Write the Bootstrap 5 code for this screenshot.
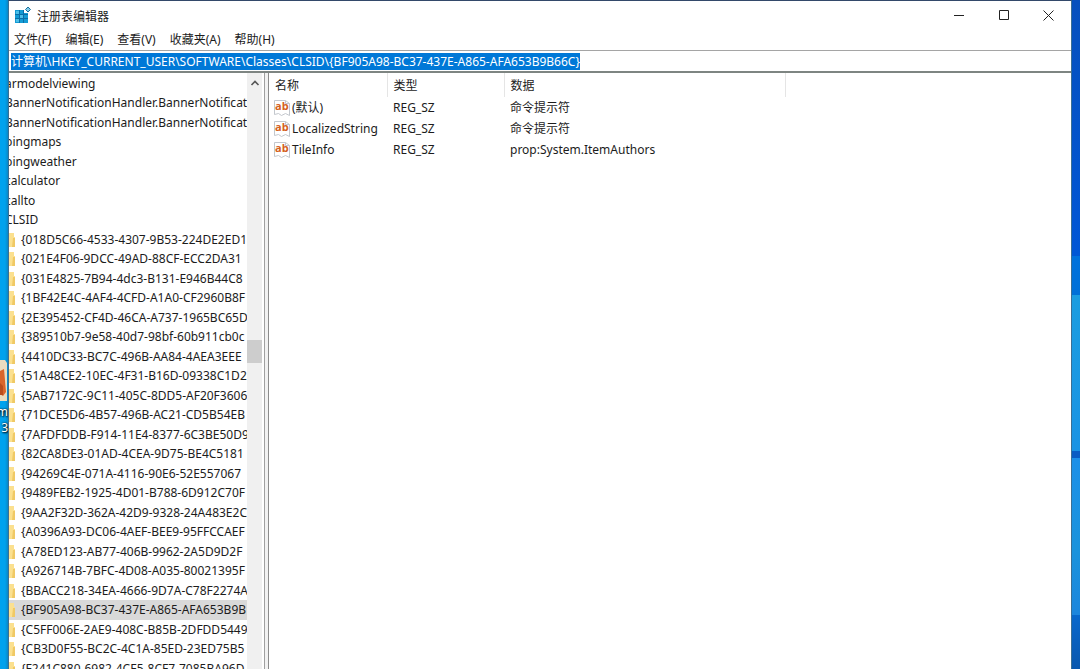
<!DOCTYPE html>
<html lang="zh-CN">
<head>
<meta charset="utf-8">
<meta name="viewport" content="width=device-width, initial-scale=1">
<title>注册表编辑器</title>
<link href="https://cdn.jsdelivr.net/npm/bootstrap@5.3.0/dist/css/bootstrap.min.css" rel="stylesheet">
<style>
  body { font-family: "Noto Sans", "Noto Sans CJK SC", sans-serif; font-size: 12px; line-height: 20px; color: #1c1c1c; background: #00a0e9; }
  .desk-left { width: 8px; background: linear-gradient(90deg, #00a2ee 5px, #0a86c4); padding-top: 360px; }
  .desk-right { width: 8px; background: linear-gradient(#0650bd 0, #0057d6 256px, #0072dc 256px, #0070d8 295px, #1b9de0 295px, #1a93e4 451px, #0a5cc4 451px, #0a5cc4 458px, #1c90e8 458px, #1b93dc 550px, #1c86dd 615px, #0868cc 615px, #0857ae 669px); }
  .desk-label { color: #fff; text-shadow: 0 0 2px #000, 1px 1px 2px #000; line-height: 16px; }
  .regedit { border: 1px solid #3b6f94; border-top-color: #33496a; border-bottom: 0; min-width: 0; }
  .title-bar { height: 28px; }
  .win-btn { width: 45px; height: 28px; }
  .menu-bar { height: 21px; padding: 1px 0 0 5px; gap: 14px; }
  .menu-bar a { color: #1c1c1c; }
  .address-bar { height: 23px; border-top: 1px solid #a5a5a5; border-bottom: 2px solid #7e8582; padding: 2px; }
  .address-bar input { font-size: 12px; line-height: 17px; height: 17px; outline: 0; color: #1c1c1c; }
  .address-bar input::selection { background: #0078d7; color: #fff; }
  .tree-pane { width: 256px; border-right: 1px solid #a0a0a0; }
  .tree { padding-top: 1px; }
  .tree li { height: 19px; line-height: 20px; white-space: nowrap; }
  .tree li:nth-child(even) { height: 20px; }
  .tree .outer { margin-left: -4px; }
  .tree .chosen { background: #d9d9d9; }
  .scroll-track { width: 15px; margin-right: 2px; background: #f0f0f0; }
  .scroll-thumb { height: 23px; background: #cdcdcd; margin-top: 249px; }
  .splitter { width: 4px; background: #f2f2f2; border-right: 1px solid #8c8c8c; }
  .values { table-layout: fixed; width: 516px; }
  .values th { font-weight: 400; height: 24px; padding: 1px 6px 0; border-right: 1px solid #e5e5e5; }
  .values td { height: 21px; padding: 0 6px; line-height: 20px; white-space: nowrap; }
  .values td:first-child { padding-left: 5px; }
  .value-name { gap: 2px; }
</style>
</head>
<body class="d-flex vh-100 overflow-hidden">
  <div class="desk-left flex-shrink-0 overflow-hidden">
    <svg class="d-block" width="8" height="44" viewBox="0 0 8 44">
      <path d="M0 0h5l2 3v38H0z" fill="#e9dcc0"/><path d="M0 11l4-2 2 23-3 4-3-2z" fill="#d9652b"/><path d="M0 23l3 3v9H0z" fill="#b94d1d"/>
    </svg>
    <div class="desk-label d-flex flex-column align-items-end"><span>m</span><span>3</span></div>
  </div>

  <main class="regedit bg-white flex-fill d-flex flex-column">
    <header class="title-bar d-flex align-items-center">
      <svg class="ms-1" width="20" height="18" viewBox="0 0 20 18">
        <path d="M2 4h13v13H2z" fill="#149bd4"/>
        <path d="M2 8.500h13M2 12.500h13M6.500 4v13M10.500 4v13" stroke="#0a6fa8"/>
        <path d="M3 5h3v3H3zM7 9h3v3H7zM3 13h3v3H3z" fill="#4cbfe8"/>
        <path d="M11 0h7v7h-7z" fill="#fff"/>
        <path d="M12.500 3.500l2.500-2.500 2.500 2.500L15 6z" fill="#7fcbea" stroke="#19709c"/>
      </svg>
      <span class="flex-fill pt-1 ms-1">注册表编辑器</span>
      <button class="win-btn btn p-0 border-0 rounded-0 d-flex align-items-center justify-content-center" aria-label="最小化"><svg width="10" height="10"><path d="M0 5.500h10" stroke="#222"/></svg></button>
      <button class="win-btn btn p-0 border-0 rounded-0 d-flex align-items-center justify-content-center" aria-label="最大化"><svg width="10" height="10"><path d="M.5.5h9v9h-9z" fill="none" stroke="#222"/></svg></button>
      <button class="win-btn btn p-0 border-0 rounded-0 d-flex align-items-center justify-content-center" aria-label="关闭"><svg width="11" height="11"><path d="M.5.5l10 10m0-10l-10 10" stroke="#222"/></svg></button>
    </header>

    <nav class="menu-bar d-flex align-items-center">
      <a class="text-decoration-none" href="#">文件(F)</a>
      <a class="text-decoration-none" href="#">编辑(E)</a>
      <a class="text-decoration-none" href="#">查看(V)</a>
      <a class="text-decoration-none" href="#">收藏夹(A)</a>
      <a class="text-decoration-none" href="#">帮助(H)</a>
    </nav>

    <div class="address-bar">
      <input id="path" class="d-block w-100 border-0 p-0" type="text" aria-label="地址" spellcheck="false" value="计算机\HKEY_CURRENT_USER\SOFTWARE\Classes\CLSID\{BF905A98-BC37-437E-A865-AFA653B9B66C}">
    </div>

    <div class="d-flex flex-fill overflow-hidden">
      <div class="tree-pane d-flex flex-shrink-0">
        <div class="flex-fill overflow-hidden">
          <ul class="tree list-unstyled mb-0" id="tree">
            <li><div class="outer">armodelviewing</div></li>
            <li><div class="outer">BannerNotificationHandler.BannerNotificat</div></li>
            <li><div class="outer">BannerNotificationHandler.BannerNotificat</div></li>
            <li><div class="outer">bingmaps</div></li>
            <li><div class="outer">bingweather</div></li>
            <li><div class="outer">calculator</div></li>
            <li><div class="outer">callto</div></li>
            <li><div class="outer">CLSID</div></li>
          </ul>
        </div>
        <div class="scroll-track flex-shrink-0">
          <svg class="d-block" width="15" height="18" viewBox="0 0 15 18"><path d="M4.500 12L8 8.500l3.500 3.500" fill="none" stroke="#555" stroke-width="1.600"/></svg>
          <div class="scroll-thumb"></div>
        </div>
      </div>
      <div class="splitter flex-shrink-0"></div>
      <div class="flex-fill overflow-hidden">
        <table class="values">
          <colgroup><col style="width:118px"><col style="width:117px"><col style="width:281px"></colgroup>
          <thead><tr><th>名称</th><th>类型</th><th>数据</th></tr></thead>
          <tbody id="values"></tbody>
        </table>
      </div>
    </div>
  </main>

  <div class="desk-right flex-shrink-0"></div>

<script src="https://cdn.jsdelivr.net/npm/bootstrap@5.3.0/dist/js/bootstrap.bundle.min.js"></script>
<script>
  const keys = ['{018D5C66-4533-4307-9B53-224DE2ED1', '{021E4F06-9DCC-49AD-88CF-ECC2DA31', '{031E4825-7B94-4dc3-B131-E946B44C8',
    '{1BF42E4C-4AF4-4CFD-A1A0-CF2960B8F', '{2E395452-CF4D-46CA-A737-1965BC65D', '{389510b7-9e58-40d7-98bf-60b911cb0c',
    '{4410DC33-BC7C-496B-AA84-4AEA3EEE', '{51A48CE2-10EC-4F31-B16D-09338C1D2', '{5AB7172C-9C11-405C-8DD5-AF20F3606',
    '{71DCE5D6-4B57-496B-AC21-CD5B54EB', '{7AFDFDDB-F914-11E4-8377-6C3BE50D9', '{82CA8DE3-01AD-4CEA-9D75-BE4C5181',
    '{94269C4E-071A-4116-90E6-52E557067', '{9489FEB2-1925-4D01-B788-6D912C70F', '{9AA2F32D-362A-42D9-9328-24A483E2C',
    '{A0396A93-DC06-4AEF-BEE9-95FFCCAEF', '{A78ED123-AB77-406B-9962-2A5D9D2F', '{A926714B-7BFC-4D08-A035-80021395F',
    '{BBACC218-34EA-4666-9D7A-C78F2274A', '{BF905A98-BC37-437E-A865-AFA653B9B', '{C5FF006E-2AE9-408C-B85B-2DFDD5449',
    '{CB3D0F55-BC2C-4C1A-85ED-23ED75B5', '{F241C880-6982-4CE5-8CF7-7085BA96D'];
  const folder = '<svg class="flex-shrink-0" width="12" height="19" viewBox="0 0 12 19"><path d="M0 3h5v4h1v10H0z" fill="#fbe08f"/><path d="M4 8h2v9H3z" fill="#f0c965"/></svg>';
  document.getElementById('tree').insertAdjacentHTML('beforeend', keys.map(k =>
    `<li class="d-flex${k.startsWith('{BF905') ? ' chosen' : ''}">${folder}<span>${k}</span></li>`).join(''));

  const icon = '<svg width="16" height="16" viewBox="0 0 16 16"><path d="M.5.5h11l4 3v12l-4-2-4 2-3-2-4 1z" fill="#fff" stroke="#c3c7cd"/><path d="M11.500.5v3h4" fill="none" stroke="#c3c7cd"/><text x="1" y="10" font-family="Open Sans, sans-serif" font-size="11" font-weight="700" fill="#d4601c">ab</text></svg>';
  document.getElementById('values').innerHTML = [['(默认)', '命令提示符'], ['LocalizedString', '命令提示符'], ['TileInfo', 'prop:System.ItemAuthors']].map(([n, d]) =>
    `<tr><td><div class="value-name d-flex align-items-center">${icon}<span>${n}</span></div></td><td>REG_SZ</td><td>${d}</td></tr>`).join('');

  const path = document.getElementById('path');
  path.focus();
  path.select();
</script>
</body>
</html>
